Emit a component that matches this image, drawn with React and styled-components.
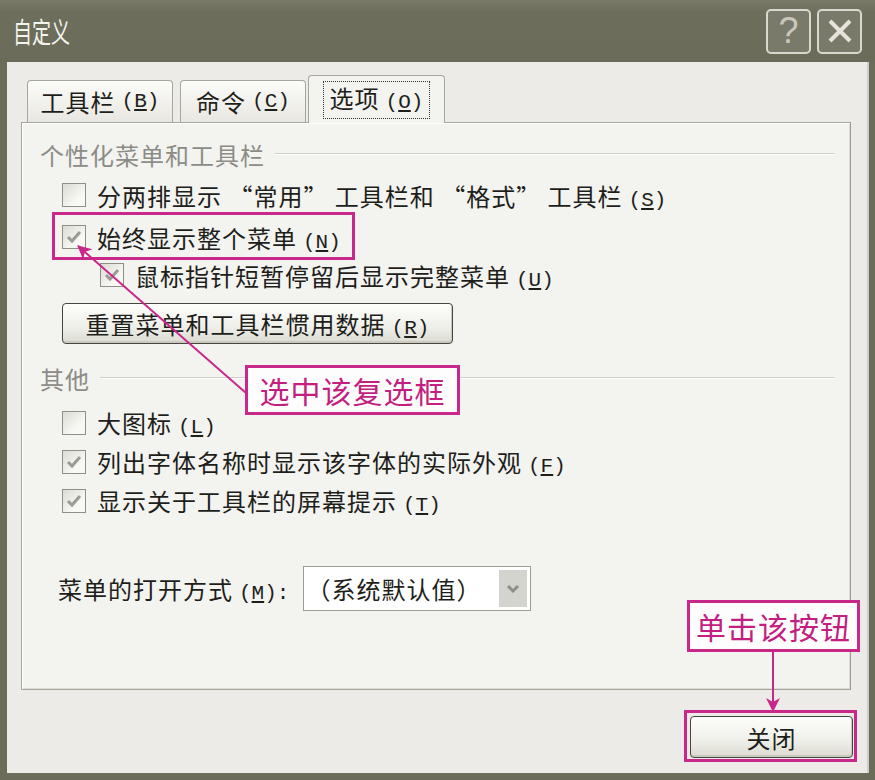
import React from 'react';
import styled, { createGlobalStyle } from 'styled-components';

const GlobalStyle = createGlobalStyle`
  html, body {
    margin: 0;
    padding: 0;
    background: #6c6c5b;
  }
  * {
    box-sizing: border-box;
  }
`;

const FONT = `"Noto Sans CJK SC", "Liberation Sans", sans-serif`;
const PINK = '#c9288b';

const Window = styled.div`
  position: relative;
  width: 875px;
  height: 780px;
  display: flex;
  flex-direction: column;
  background: #6c6c5b;
  font-family: ${FONT};
  overflow: hidden;
`;

const TitleBar = styled.div`
  height: 62px;
  display: flex;
  align-items: center;
  justify-content: space-between;
  padding: 0 13px 0 13px;
  background: linear-gradient(#7a7a69, #6e6e5d 20%, #6b6b5a);
`;

const Title = styled.h1`
  margin: 0;
  font-size: 28px;
  font-weight: normal;
  color: #f4f4ee;
  transform: scaleX(0.68);
  transform-origin: left center;
`;

const CaptionButtons = styled.div`
  display: flex;
  gap: 6px;
`;

const CaptionButton = styled.div`
  width: 45px;
  height: 45px;
  display: flex;
  align-items: center;
  justify-content: center;
  border: 2px solid #d8d8ce;
  border-radius: 5px;
  background: #7a7a6a;
  color: #c9c7bd;
  font-family: "Liberation Sans", sans-serif;
  font-size: 36px;
`;

const Body = styled.div`
  flex: 1;
  display: flex;
  flex-direction: column;
  margin: 0 6px 7px 7px;
  padding: 13px 18px 0 14px;
  background: #ecebe7;
  box-shadow: inset -2px 0 0 #cfcfc8;
`;

const TabRow = styled.div`
  display: flex;
  align-items: flex-end;
  height: 47px;
  margin-left: 6px;
`;

const Tab = styled.div`
  position: relative;
  z-index: ${(p) => (p.$active ? 2 : 0)};
  width: ${(p) => p.$width}px;
  height: ${(p) => (p.$active ? 48 : 42)}px;
  margin-right: ${(p) => p.$gap || 0}px;
  margin-bottom: ${(p) => (p.$active ? -1 : 0)}px;
  display: flex;
  align-items: center;
  justify-content: center;
  border: 1px solid #a6a69c;
  border-bottom: none;
  border-radius: 4px 4px 0 0;
  background: ${(p) => (p.$active ? '#f3f3f0' : 'linear-gradient(#fbfbf8, #e8e7e1)')};
  font-size: 24px;
  color: #1e1e1a;
  letter-spacing: 1px;
`;

const FocusLabel = styled.span`
  padding: 0 6px;
  border: 1px dotted #333;
  line-height: 31px;
`;

const Panel = styled.div`
  height: 568px;
  padding: 16px 15px 0 18px;
  border: 1px solid #a6a69c;
  border-right-color: #9a9a90;
  background: #f3f3f0;
  box-shadow: inset 1px 1px 0 #ffffff, inset -1px -1px 0 #dcdcd6;
`;

const GroupHeader = styled.div`
  height: 30px;
  display: flex;
  align-items: center;
  margin-top: ${(p) => p.$top || 0}px;
  font-size: 24px;
  color: #8c8c86;
  letter-spacing: 1px;

  &::after {
    content: '';
    flex: 1;
    margin-left: 10px;
    border-top: 1px solid #cfcfc9;
    border-bottom: 1px solid #ffffff;
  }
`;

const CheckRow = styled.div`
  height: ${(p) => p.$height || 38}px;
  display: flex;
  align-items: center;
  gap: 11px;
  margin-top: ${(p) => p.$top || 0}px;
  margin-left: ${(p) => p.$indent || 22}px;
  font-size: 24px;
  color: #1e1e1a;
  letter-spacing: 1px;
  white-space: nowrap;
`;

const Box = styled.span`
  width: 24px;
  height: 24px;
  flex: none;
  display: flex;
  align-items: center;
  justify-content: center;
  border: 1px solid #8f8f88;
  background: linear-gradient(135deg, #dcdcd4, #f8f8f5 70%);
`;

const Key = styled.span`
  margin-left: 6px;
  font-family: "Liberation Mono", monospace;
  font-size: 21px;
  letter-spacing: 0;

  u {
    text-underline-offset: 2px;
  }
`;

const PushButton = styled.button`
  width: ${(p) => p.$width}px;
  height: ${(p) => p.$height}px;
  margin-top: ${(p) => p.$top || 0}px;
  margin-left: ${(p) => p.$left || 0}px;
  padding: 0;
  border: 1px solid #46463f;
  border-radius: 4px;
  background: linear-gradient(#fdfdfb, #efefea 60%, #dadad2);
  box-shadow: inset -1px -2px 0 #c9c9c0;
  font-family: ${FONT};
  font-size: 24px;
  color: #1e1e1a;
  letter-spacing: 1px;
`;

const SelectRow = styled.div`
  display: flex;
  align-items: center;
  gap: 14px;
  margin-top: 46px;
  margin-left: 18px;
  font-size: 24px;
  color: #1e1e1a;
  letter-spacing: 1px;
`;

const Select = styled.div`
  width: 228px;
  height: 45px;
  display: flex;
  align-items: center;
  justify-content: space-between;
  padding: 3px 3px 3px 2px;
  border: 1px solid #9c9c94;
  background: #ffffff;
`;

const SelectArrow = styled.span`
  width: 28px;
  height: 100%;
  display: flex;
  align-items: center;
  justify-content: center;
  background: #d4d4ce;
`;

const Footer = styled.div`
  display: flex;
  justify-content: flex-end;
  padding-top: 26px;
  margin-right: -2px;
`;

const Callout = styled.div`
  position: absolute;
  z-index: 5;
  left: ${(p) => p.$x}px;
  top: ${(p) => p.$y}px;
  width: ${(p) => p.$w}px;
  height: ${(p) => p.$h}px;
  display: flex;
  align-items: center;
  justify-content: center;
  border: 3px solid ${PINK};
  background: #fdfdfd;
  color: #c21f80;
  font-size: 30px;
  letter-spacing: 1px;
`;

const Highlight = styled.div`
  position: absolute;
  z-index: 5;
  left: ${(p) => p.$x}px;
  top: ${(p) => p.$y}px;
  width: ${(p) => p.$w}px;
  height: ${(p) => p.$h}px;
  border: 3px solid ${PINK};
`;

const Arrows = styled.svg`
  position: absolute;
  z-index: 6;
  left: 0;
  top: 0;
  pointer-events: none;
`;

function Check({ on }) {
  return (
    <Box>
      {on && (
        <svg width="16" height="14" viewBox="0 0 16 14">
          <path d="M2 7 L6 11 L14 2" fill="none" stroke="#9a9a96" strokeWidth="3" />
        </svg>
      )}
    </Box>
  );
}

function Mn({ k, colon }) {
  return (
    <Key>
      (<u>{k}</u>){colon ? ':' : ''}
    </Key>
  );
}

export default function App() {
  return (
    <>
      <GlobalStyle />
      <Window lang="zh-CN">
        <TitleBar>
          <Title>自定义</Title>
          <CaptionButtons>
            <CaptionButton>?</CaptionButton>
            <CaptionButton>
              <svg width="28" height="28" viewBox="0 0 28 28">
                <path d="M4 4 L24 24 M24 4 L4 24" stroke="#e6e4da" strokeWidth="4" />
              </svg>
            </CaptionButton>
          </CaptionButtons>
        </TitleBar>

        <Body>
          <TabRow>
            <Tab $width={146} $gap={7}>
              工具栏<Mn k="B" />
            </Tab>
            <Tab $width={126} $gap={2}>
              命令<Mn k="C" />
            </Tab>
            <Tab $width={137} $active>
              <FocusLabel>
                选项<Mn k="O" />
              </FocusLabel>
            </Tab>
          </TabRow>

          <Panel>
            <GroupHeader>个性化菜单和工具栏</GroupHeader>
            <CheckRow $top={7}>
              <Check />
              <span>
                分两排显示 “常用” 工具栏和 “格式” 工具栏<Mn k="S" />
              </span>
            </CheckRow>
            <CheckRow $top={4}>
              <Check on />
              <span>
                始终显示整个菜单<Mn k="N" />
              </span>
            </CheckRow>
            <CheckRow $indent={60}>
              <Check on />
              <span>
                鼠标指针短暂停留后显示完整菜单<Mn k="U" />
              </span>
            </CheckRow>
            <PushButton $width={391} $height={41} $top={9} $left={22}>
              重置菜单和工具栏惯用数据<Mn k="R" />
            </PushButton>

            <GroupHeader $top={19}>其他</GroupHeader>
            <CheckRow $top={10} $height={39}>
              <Check />
              <span>
                大图标<Mn k="L" />
              </span>
            </CheckRow>
            <CheckRow $height={39}>
              <Check on />
              <span>
                列出字体名称时显示该字体的实际外观<Mn k="F" />
              </span>
            </CheckRow>
            <CheckRow $height={39}>
              <Check on />
              <span>
                显示关于工具栏的屏幕提示<Mn k="T" />
              </span>
            </CheckRow>

            <SelectRow>
              <span>
                菜单的打开方式<Mn k="M" colon />
              </span>
              <Select>
                <span>（系统默认值）</span>
                <SelectArrow>
                  <svg width="14" height="10" viewBox="0 0 14 10">
                    <path d="M2 2 L7 7 L12 2" fill="none" stroke="#8e8e88" strokeWidth="3" />
                  </svg>
                </SelectArrow>
              </Select>
            </SelectRow>
          </Panel>

          <Footer>
            <PushButton $width={163} $height={42}>
              关闭
            </PushButton>
          </Footer>
        </Body>

        <Highlight $x={52} $y={212} $w={303} $h={48} />
        <Highlight $x={684} $y={710} $w={173} $h={52} />
        <Callout $x={245} $y={365} $w={215} $h={50}>
          选中该复选框
        </Callout>
        <Callout $x={687} $y={600} $w={173} $h={52}>
          单击该按钮
        </Callout>

        <Arrows width="875" height="780" viewBox="0 0 875 780">
          <defs>
            <marker id="headWide" markerWidth="14" markerHeight="16" refX="13" refY="8" orient="auto" markerUnits="userSpaceOnUse">
              <path d="M0 1 L14 8 L0 15 L4 8 Z" fill={PINK} />
            </marker>
          </defs>
          <line x1="246" y1="393" x2="78" y2="246" stroke={PINK} strokeWidth="2" markerEnd="url(#headWide)" />
          <line x1="773" y1="652" x2="773" y2="711" stroke={PINK} strokeWidth="2" markerEnd="url(#headWide)" />
        </Arrows>
      </Window>
    </>
  );
}
